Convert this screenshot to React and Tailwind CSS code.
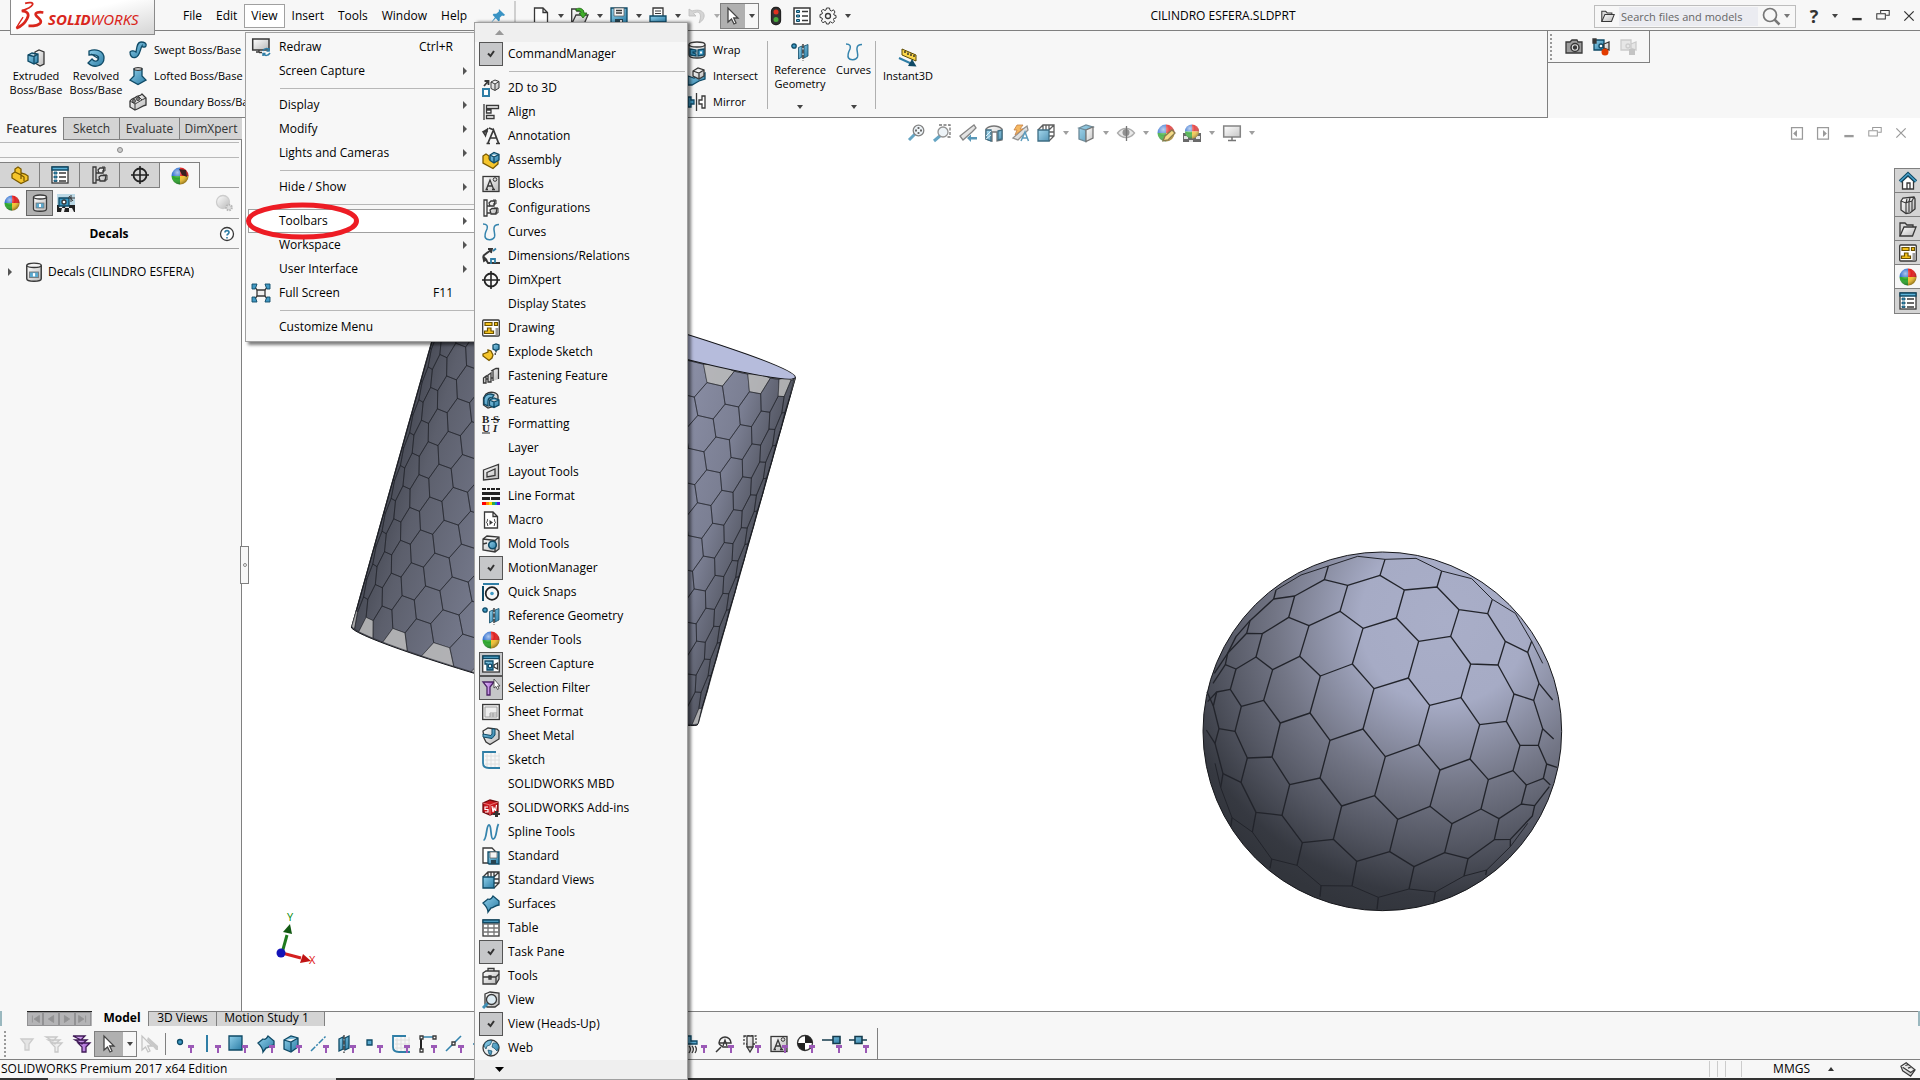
import clsx from "clsx";

const INK = "#383838";
const NAVY = "#0f4a66";
const BLUE = "url(#blue)";
const GRAY = "url(#gray)";

// shared paint servers for every icon and for the two models
function Paints() {
  return (
    <svg className="absolute size-0" aria-hidden="true">
      <defs>
        <linearGradient id="blue" x1="0" y1="0" x2="1" y2="1">
          <stop offset="0" stopColor="#8fcfea" />
          <stop offset="1" stopColor="#2c7da6" />
        </linearGradient>
        <linearGradient id="gray" x1="0" y1="0" x2="1" y2="1">
          <stop offset="0" stopColor="#ffffff" />
          <stop offset="1" stopColor="#b9b9b9" />
        </linearGradient>
        <linearGradient id="purple" x1="0" y1="0" x2="1" y2="0">
          <stop offset="0" stopColor="#e9c8ff" />
          <stop offset="1" stopColor="#a35fd0" />
        </linearGradient>
        <radialGradient id="shine" cx="0.35" cy="0.3" r="0.7">
          <stop offset="0" stopColor="#fff" stopOpacity="0.6" />
          <stop offset="0.5" stopColor="#fff" stopOpacity="0" />
          <stop offset="1" stopColor="#000" stopOpacity="0.35" />
        </radialGradient>
        <radialGradient id="sphere" gradientUnits="userSpaceOnUse" cx="790" cy="270" r="900">
          <stop offset="0" stopColor="#a9aec8" />
          <stop offset="0.28" stopColor="#a6abc5" />
          <stop offset="0.42" stopColor="#8c90a5" />
          <stop offset="0.56" stopColor="#737686" />
          <stop offset="0.75" stopColor="#545763" />
          <stop offset="0.92" stopColor="#363941" />
          <stop offset="1" stopColor="#32353c" />
        </radialGradient>
        <linearGradient id="cylinder" gradientUnits="userSpaceOnUse" x1="155" y1="460" x2="1194" y2="751">
          <stop offset="0" stopColor="#4a4d58" />
          <stop offset="0.08" stopColor="#5c5f6c" />
          <stop offset="0.3" stopColor="#737789" />
          <stop offset="0.7" stopColor="#8b8fa6" />
          <stop offset="0.88" stopColor="#7b7f93" />
          <stop offset="1" stopColor="#545763" />
        </linearGradient>
      </defs>
    </svg>
  );
}

const ball = (
  <g stroke="none">
    <path d="M9 9V0.500A8.500 8.500 0 0 0 0.500 9Z" fill="#2f6fd0" />
    <path d="M9 9V0.500A8.500 8.500 0 0 1 17.500 9Z" fill="#e02020" />
    <path d="M9 9H0.500A8.500 8.500 0 0 0 9 17.500Z" fill="#2ba52b" />
    <path d="M9 9H17.500A8.500 8.500 0 0 1 9 17.500Z" fill="#f4c22e" />
    <circle cx="9" cy="9" r="8.600" fill="url(#shine)" />
  </g>
);

const refGeometry = (
  <>
    <circle cx="3" cy="3" r="2.2" fill="#3f9ac4" stroke={NAVY} />
    <path d="M7.5 4.5 11 3V14L7.5 16ZM13 3 17 1.5V13L13 15Z" fill={BLUE} stroke={NAVY} strokeWidth="0.8" />
    <path d="M12 1V18" stroke="#222" strokeDasharray="4 1.5" />
  </>
);

const curves = (
  <path d="M1 1C5 1 6 3 5 6C3.500 9 2 12 3.500 15C5 17.500 11 17.500 12.500 14C13.500 11 11.500 8 12 5C12.300 2.500 14 1.500 17 1.500" stroke="#3584ad" strokeWidth="1.5" />
);

const cubeView = (
  <>
    <path d="M1 6 6 1H17V12L12 17M6 1V6M17 1 12 6M12 1V6M9 1V6M12 8H17M12 12H17" />
    <path d="M1 6H12V17H1Z" fill={BLUE} stroke={NAVY} />
  </>
);

const filter = <path d="M1 3H12L8 8V16H5V8Z" fill="url(#purple)" stroke="#4b2266" />;
const arrowPath = "M4 1V15L7.500 12 10 17 12 16 9.700 11H14Z";

const floppy = (
  <>
    <path d="M1 1H17V17H3L1 15Z" fill={BLUE} stroke={NAVY} />
    <path d="M4 1H14V9H4Z" fill="#f5f5f5" stroke="#666" strokeWidth="0.8" />
    <path d="M6 3.500H12M6 6H12" />
    <path d="M5 12H13V17H5Z" fill="#274350" stroke="none" />
    <path d="M10 13H12V16H10Z" fill="#ddd" stroke="none" />
  </>
);

const camcorder = (
  <>
    <path d="M2 2H12V12H2Z" fill={BLUE} stroke={NAVY} />
    <path d="M1 1H4V5H1Z" fill={INK} />
    <circle cx="9" cy="8" r="2" fill="#fff" stroke={NAVY} />
    <path d="M12 6 17 4V12L12 10Z" fill={GRAY} />
  </>
);

const drawing = (
  <>
    <rect x="0.700" y="1" width="16.600" height="16" rx="1" fill="#fff" />
    <path d="M3 3.500H10V6.500H3ZM12.500 3.500H15.500V6.500H12.500ZM2.500 14.500V12H5.500V9H9V12H11.500V14.500Z" fill="#f3c11b" stroke="#6b5200" strokeWidth="1.200" />
    <path d="M13.500 9H16.500V16.500H13.500Z" fill="#9a9a9a" stroke="none" />
  </>
);

const listPane = (
  <>
    <rect x="1" y="1" width="16" height="16" fill="#fff" />
    <path d="M1 1H17V4H1Z" fill="#5db2d8" stroke={NAVY} />
    <path d="M3 6H6V8H3ZM3 10H6V12H3ZM3 14H6V15.500H3Z" fill="#3f9ac4" stroke={NAVY} strokeWidth="0.8" />
    <path d="M8 7H15M8 11H15M8 15H15" />
  </>
);

const config = (
  <>
    <path d="M2 17V1H5V17ZM5 7H8M5 14H8" />
    <path d="M7 4 9 2H13L12 7H8ZM8 11 10 9.500H15L14 15H9Z" fill={GRAY} />
    <path d="M11 1H14V5H11M12 9H16V14H13" strokeWidth="1" />
  </>
);

const crosshair = (
  <>
    <circle cx="9" cy="9" r="6.500" stroke="#222" strokeWidth="1.800" />
    <path d="M9 0V18M0 9H18" stroke="#222" strokeWidth="1.600" />
  </>
);

const assemblyPart = "M1 5 4 3 7 5V8L12 11 16 9V13L11 17.500 1 12Z";

const cylinderDecal = (
  <>
    <path d="M2.500 3V15C2.500 18 15.500 18 15.500 15V3" fill={GRAY} />
    <ellipse cx="9" cy="3" rx="6.500" ry="2" fill="#f4f4f4" />
    <rect x="5" y="9" width="8" height="5" fill="#5aa9cf" stroke="#777" strokeWidth="0.8" />
    <path d="M8 10H10V13H8Z" fill="#fff" stroke="none" />
  </>
);

const magnifier = (
  <>
    <path d="M8 10 2 16" stroke="#3f8fb5" strokeWidth="3" />
    <circle cx="11.500" cy="6.500" r="5.300" fill="#e9f1f6" stroke="#666" />
  </>
);

const openFolder = (
  <>
    <path d="M1 16V3H6L8 5H14V8" fill="#d9d9d9" />
    <path d="M1 16 5 7H17L13.500 16Z" fill={GRAY} />
  </>
);

const icons = {
  twoToThree: (
    <>
      <path d="M1 10H7V17H1Z" fill="#fff" stroke="#2f7ea6" strokeWidth="2" />
      <path d="M2 7 5.500 3M2.500 2H6.500V6" strokeWidth="1.800" />
      <path d="M9 3 13 1 17 2.500V9L13 11.500 9 9.500ZM9 3 13 5 17 2.500M13 5V11" fill={GRAY} strokeWidth="1" />
    </>
  ),
  align: <path d="M2 1V17M4.500 2.500H16.500V5.500H4.500ZM4.500 7H9V10H4.500ZM4.500 12.500H12V15.500H4.500Z" fill="#fff" />,
  annotation: (
    <>
      <path d="M6 16 11.500 3 16.500 16M8 11H14.500M4.500 16.500H8M14 16.500H18M7 1 12 3" strokeWidth="1.700" />
      <path d="M1 4 3.500 9 6 1M1 5H5L3 8Z" fill={INK} />
    </>
  ),
  assembly: (
    <>
      <path d={assemblyPart} fill="#f5c52c" stroke="#7a5a00" />
      <path d="M8 4 12 1.500 17 3.500V9L12 12 8 9.500ZM8 4 12 6 17 3.500M12 6V12" fill={BLUE} stroke={NAVY} />
    </>
  ),
  blocks: (
    <>
      <rect x="1" y="1.500" width="16" height="15" fill={GRAY} />
      <path d="M4.500 14 8 5 11.500 14M6 11H10M3.500 14.500H6M10 14.500H13" />
      <circle cx="13" cy="4.500" r="1.800" strokeWidth="1" />
    </>
  ),
  config,
  curves,
  dimensions: (
    <>
      <path d="M1 9 9 3M1 9 6 5M1 9 2 14 5 12M6 2 10 2 9 6M1 9C4 12 5 14 6 16H18" strokeWidth="1.800" />
      <path d="M11 4 14 1.500M9 11V17M9 12H13V16" stroke="#2f7ea6" strokeWidth="1.800" />
    </>
  ),
  crosshair,
  drawing,
  explode: (
    <>
      <path d="M1 11 6 9V7L9 8 11 12 10 15 7 17.500 1 13Z" fill="#f5c52c" stroke="#7a5a00" />
      <path d="M11 2 14 1 17 2V6L14 7.500 11 6Z" fill={BLUE} stroke={NAVY} />
      <path d="M14 8V11H11" strokeDasharray="1.500 1.500" stroke="#222" />
    </>
  ),
  fastening: <path d="M1.500 16V11L4 9V16ZM6 15V8L9 6V15ZM11 14V3L14 1.500H16.500V12M4 12H6M9 11H11M4 9H6M9 4 11 3" fill={GRAY} />,
  features: (
    <>
      <path d="M4 3C8 0 15 1 16 5L16 14 6 17 1.500 14V7Z" fill={GRAY} />
      <path d="M2 8C3 3 8 2 12 4L10 7C7 6 6 8 6 11L6 15 2 13Z" fill={BLUE} stroke={NAVY} />
      <path d="M7.500 9 12 7 17 9V14L12 16.500 7.500 14.500ZM7.500 9 12 11 17 9M12 11V16" fill={BLUE} stroke={NAVY} />
    </>
  ),
  formatting: (
    <g fontFamily="Liberation Serif, serif" fontSize="11" fontWeight="bold" stroke="none" fill="#222">
      <text x="0" y="8">B</text>
      <text x="11" y="8">S</text>
      <text x="0" y="17">U</text>
      <text x="11" y="17" fontStyle="italic">I</text>
      <path d="M9 4H18V5H9ZM0 17.500H8V18.500H0Z" />
    </g>
  ),
  layout: <path d="M1.500 7 16.500 1.500V15.500L1.500 17ZM5 9.500 13 6V12.500L5 14Z" fill={GRAY} />,
  lineFormat: (
    <g stroke="none">
      <path d="M0 1H4V3H0ZM5 1H8V3H5ZM9 1H13V3H9ZM14 1H18V3H14ZM0 5H18V8H0ZM0 10H8V13H0ZM9 10H18V13H9Z" fill="#222" />
      <path d="M0 15H4V18H0Z" fill="#f00" />
      <path d="M4 15H7V18H4Z" fill="#f80" />
      <path d="M7 15H10V18H7Z" fill="#fd0" />
      <path d="M10 15H13V18H10Z" fill="#3a4" />
      <path d="M13 15H15V18H13Z" fill="#08c" />
      <path d="M15 15H18V18H15Z" fill="#51d" />
    </g>
  ),
  macro: (
    <>
      <path d="M2.500 1H11L15.500 5.500V17H2.500ZM11 1V5.500H15" fill="#fff" />
      <path d="M6 8C5 8 6 10 4.500 11.500C6 12 5 14 6 15M12 8C13 8 12 10 13.500 11.500C12 12 13 14 12 15" strokeWidth="1" />
      <path d="M7.500 9V14L11 11.500Z" fill={INK} stroke="none" />
    </>
  ),
  mold: (
    <>
      <path d="M1 4 5 1 17 2V14L13 17 1 15ZM1 4 13 5.500 17 2M13 5.500V17M1 9 5 8" fill={GRAY} />
      <circle cx="10.500" cy="10" r="3.800" fill={BLUE} stroke={NAVY} strokeWidth="1.600" />
    </>
  ),
  snaps: (
    <>
      <path d="M1 1H17" stroke="#2f7ea6" strokeWidth="2" />
      <path d="M1 3V18" stroke={NAVY} strokeWidth="2" />
      <circle cx="10" cy="10.500" r="6.300" stroke="#222" strokeWidth="1.700" />
      <circle cx="10" cy="10.500" r="1.800" fill="#3f9ac4" stroke="none" />
    </>
  ),
  refGeometry,
  ball,
  screenCapture: (
    <>
      <rect x="0.700" y="1" width="16.600" height="16" fill="#fff" />
      <path d="M1 1H17V3.500H1Z" fill="#5db2d8" stroke={NAVY} />
      <path d="M3 6H11V15H5V9H3Z" fill={BLUE} stroke={NAVY} />
      <circle cx="8" cy="11" r="1.800" fill="#fff" stroke={NAVY} />
      <path d="M12 10 15.500 8V14L12 12Z" fill="#fff" />
    </>
  ),
  selectionFilter: (
    <>
      {filter}
      <path d="M12 0V9L14 7.500 15.500 10.500 17 9.500 15.500 7H18Z" fill="#fff" strokeWidth="0.8" />
    </>
  ),
  sheetFormat: (
    <>
      <rect x="0.700" y="1.500" width="16.600" height="15" fill="#eee" />
      <path d="M3 4H15V14H3ZM8 14V10H15M8 12H15M11 10V14" stroke="#999" strokeWidth="0.900" />
    </>
  ),
  sheetMetal: (
    <>
      <path d="M1 4 6 1 15 2 17 4V12L8 17.500 4 15 2 11Z" fill={GRAY} />
      <path d="M1 7V10L10 11.500 13 8V2H10V7L9 8.500Z" fill={BLUE} stroke={NAVY} strokeWidth="1" />
    </>
  ),
  sketch: (
    <>
      <path d="M5 3V18M9 0V18M13 0V18M17 2V18M3 5H18M3 9H18M3 13H18" stroke="#dedede" strokeWidth="1" />
      <path d="M14 1H1V12C1 16 3 17 7 17H18" stroke="#2f7ea6" strokeWidth="1.800" />
    </>
  ),
  addins: (
    <>
      <path d="M1 4 8 1 16 3V13L8 16 1 13Z" fill="#c8171e" stroke="#6d0a0e" />
      <path d="M1 4 8 6 16 3M8 6V16" stroke="#f28b8b" strokeWidth="0.8" />
      <path d="M6 8H3V10.500H6V13H3M10 7 11 13 12 9 13.500 12 14.500 6" stroke="#fff" strokeWidth="1.200" />
      <path d="M13 12H16V14H18V16H16V18H13V16H11V14H13Z" fill="#333" stroke="none" />
    </>
  ),
  spline: <path d="M1.500 17C5 17 4 2 7 2C10 2 8 16 11 16C15 16 14 5 16.500 1" stroke="#3584ad" strokeWidth="1.800" />,
  standard: (
    <>
      <path d="M1 1H10L13 4V16H1Z" fill="#fff" />
      <path d="M6 5H17V17H7L6 16Z" fill={BLUE} stroke={NAVY} />
      <path d="M8 5H15V11H8Z" fill="#f5f5f5" stroke="#666" strokeWidth="0.8" />
      <path d="M9 13H14V17H9Z" fill="#274350" stroke="none" />
    </>
  ),
  cubeView,
  surfaces: <path d="M1 8 6 4C8 5 10 3 11 1L17 6V10C13 10 12 13 9 13L6 17C6 13 4 11 1 8Z" fill={BLUE} stroke={NAVY} />,
  table: (
    <>
      <rect x="1" y="1" width="16" height="16" fill="#fff" />
      <path d="M1 5H17V4H1ZM1 9H17M1 13H17M6 4V17M12 4V17" stroke="#777" />
      <path d="M1 1H17V3.500H1Z" fill="#5db2d8" stroke={NAVY} />
    </>
  ),
  toolbox: (
    <>
      <path d="M1 6 4 4H17V12L14 17H1Z" fill={GRAY} />
      <path d="M6 4V1.500H12V4M1 10H14L17 7M14 10V16M7 9V12H9V9Z" />
    </>
  ),
  viewTool: (
    <>
      <path d="M3 3 8 1 17 2V13L13 16H5L3 13Z" fill={GRAY} />
      <path d="M6 12 1 17" stroke="#3f8fb5" strokeWidth="3" />
      <circle cx="9.500" cy="8.500" r="5" fill="#dcebf3" />
    </>
  ),
  web: (
    <>
      <circle cx="9" cy="9" r="8" fill="#e9eef1" />
      <path d="M3 4C6 1 9 1 10 2L8 6 5 7 4 10 2 7ZM11 4 15 4 17 8 15 12 12 9 10 8ZM6 11 10 12 9 16 7 15Z" fill={BLUE} stroke={NAVY} strokeWidth="0.700" />
    </>
  ),
  redraw: (
    <>
      <path d="M0.700 1H17V12H0.700Z" fill={GRAY} strokeWidth="1.500" />
      <path d="M7 12V14H4M7 14.500H10" />
      <path d="M11 13C12 10 16 10 17 12M17 10V13H14.500M18 15C16 18 13 18 11.500 16M11 18V15.500H13.500" stroke="#2f7ea6" strokeWidth="1.500" />
    </>
  ),
  fullScreen: (
    <>
      <path d="M5 6H13V12H5Z" fill="#eee" />
      <path d="M5 6 2 2M13 6 16 2M5 12 2 16M13 12 16 16" />
      <path d="M0 0H5L4 3 3 5H0ZM18 0H13L14 3 15 5H18ZM0 18H5L4 15 3 13H0ZM18 18H13L14 15 15 13H18Z" fill="#4399c3" stroke={NAVY} strokeWidth="0.900" />
    </>
  ),
  extruded: (
    <>
      <path d="M8 3 12 1 17 3V15L13 17 8 14Z" fill={GRAY} />
      <path d="M1 6 5 4 11 5V13L7 15 1 12ZM1 6 7 7.500 11 5M7 7.500V15" fill={BLUE} stroke={NAVY} />
    </>
  ),
  revolved: (
    <path d="M2 2C9-1 17 2 17 9C17 17 7 20 1 14L5 10C8 14 12 12 11.500 8C10 6 7 5 2 6ZM4 5 12 10" fill={BLUE} stroke={NAVY} />
  ),
  swept: <path d="M1 11C2 9 6 10 7 11C8 6 8 1 12 1C15 1 18 2 17 5C16 7 13 6 13 5C11 8 11 16 6 16.500C3 17 1 15 1 11Z" fill={BLUE} stroke={NAVY} />,
  lofted: (
    <>
      <path d="M5 2 13 2 13 9 17 13 9 17.500 1 13 5 9Z" fill={BLUE} stroke={NAVY} />
      <ellipse cx="9" cy="2" rx="4" ry="1.300" fill="#eee" />
    </>
  ),
  boundary: (
    <>
      <path d="M1 8C3 5 5 6 7 4C9 2 11 4 13 1L17 5V12C13 13 11 15 6 17L1 14Z" fill={GRAY} />
      <path d="M1 8 6 11V17M6 11C10 9 12 7 17 5M9 3 13 7" strokeWidth="1" />
      <circle cx="9" cy="6" r="1.300" />
      <circle cx="5" cy="8" r="1.300" />
    </>
  ),
  wrap: (
    <>
      <path d="M1 3.500V14C1 18 17 18 17 14V3.500" fill={GRAY} />
      <ellipse cx="9" cy="3.500" rx="8" ry="2.500" fill="#f4f4f4" />
      <path d="M2 8 8 9V11H5V12L8 13V15L2 14ZM10 9 16 8V14L10 15Z" fill="#3f9ac4" stroke={NAVY} />
      <path d="M12 10.500H14V12.500H12Z" fill="#fff" stroke="none" />
    </>
  ),
  intersect: (
    <>
      <path d="M0 9 6 11 17 6V12L11 14 4 18H0Z" fill={BLUE} stroke={NAVY} />
      <path d="M5 4 10 1 16 3V9L11 12 5 9ZM5 4 11 6 16 3M11 6V11" fill={GRAY} />
    </>
  ),
  mirror: (
    <>
      <path d="M0 4H3V7H6V11H3V14H0Z" fill="#3f9ac4" stroke={NAVY} />
      <path d="M8.500 0V18" />
      <path d="M17 3V15H14V11H11V7H14V3Z" fill="#fff" />
    </>
  ),
  instant3d: (
    <>
      <path d="M3 0 17 6V12L3 6Z" fill="#fbd64a" stroke="#5c4a00" strokeWidth="1" />
      <path d="M6 2V4M9 3.500V6M12 4.500V7M15 6V8" stroke="#222" />
      <path d="M0 9 12 14.500" stroke="#2f7ea6" strokeWidth="2" />
      <path d="M13 10 17.500 17.500 9 17Z" fill={NAVY} stroke="none" />
    </>
  ),
  newDoc: <path d="M2.500 1H11L15.500 5.500V17H2.500ZM11 1V5.500H15" fill="#fff" />,
  openDoc: (
    <>
      <path d="M0.700 17V2H5L6 4H12V7M0.700 17 5 8H17L13 17Z" fill={GRAY} />
      <path d="M5 2C9 0 13 2 13 6H16L12 11 8 6H10C10 4 8 3 5 4Z" fill="#3fae2a" stroke="#1c6310" strokeWidth="0.8" />
    </>
  ),
  floppy,
  printer: (
    <>
      <path d="M4 9V1H14V9" fill="#fff" />
      <path d="M1 9H17V15H1Z" fill={BLUE} stroke={NAVY} />
      <path d="M6 4H12M6 6.500H12" strokeWidth="1" />
    </>
  ),
  undo: <path d="M1 2V9H8L5.500 6.500C10 3 15 6 11 16C20 11 17 0 4 4Z" fill="#d5d5d5" stroke="#bbb" strokeWidth="0.8" />,
  arrow: <path d={arrowPath} fill="#fff" stroke="#444" />,
  traffic: (
    <>
      <rect x="4.500" y="0.500" width="9" height="17" rx="4" fill="#333" stroke="#222" />
      <circle cx="9" cy="5" r="2.500" fill="#e0301e" stroke="none" />
      <circle cx="9" cy="12.500" r="2.500" fill="#46a83a" stroke="none" />
    </>
  ),
  options: (
    <>
      <rect x="1" y="1" width="16" height="16" fill="#fff" strokeWidth="1.500" />
      <path d="M3.500 3.500H6.500V5.500H3.500ZM3.500 8H6.500V10H3.500ZM3.500 12.500H6.500V14.500H3.500Z" fill="#5db2d8" stroke={NAVY} strokeWidth="1" />
      <path d="M9 4.500H15M9 9H15M9 13.500H15" />
    </>
  ),
  gear: (
    <>
      <circle cx="9" cy="9" r="2.500" />
      <path d="M7.500 1H10.500L11 3.300 12.500 4 14.500 2.800 16 5 14.700 7 15 8 17 8.500V11L14.800 11.500 14.500 12.500 15.500 14.500 13.500 16 11.500 14.800 10.500 15 10 17H7.500L7 15 6 14.500 4 15.700 2.300 14 3.500 12 3 11 1 10.500V7.500L3 7 3.500 6 2.300 4 4 2.300 6 3.500 7 3Z" strokeWidth="1" />
    </>
  ),
  pin: <path d="M10 1 17 8 15 9 13.500 8.500 11 11 11 14 9.500 15 6.500 11.500 1 17 5.500 10.500 3 8 4 6.500 7 6.500 10 4Z" fill="#3a93c4" stroke="none" />,
  part: <path d="M1 8 4 6V3L7 1 10 3V7L14 8 17 10V14L10 17.500 1 12ZM4 6 10 9V13M10 7 10 9 13 11V15" fill="#f5c52c" stroke="#7a5a00" />,
  listPane,
  ballDark: (
    <>
      {ball}
      <path d="M8 2 15 3 16 10 11 8Z" fill="#3a2020" stroke="none" />
    </>
  ),
  cylinderDecal,
  scene: (
    <>
      <path d="M0 0H18V11H0Z" fill="#bcd9e6" stroke="none" />
      <path d="M0 11H18V18H0Z" fill="#222" stroke="none" />
      <path d="M3 11H6L5 14H2ZM9 11H12V14H8ZM5 14H8L7 18H4ZM12 14H15L17 18H12Z" fill="#eee" stroke="none" />
      <path d="M2 4H12V12H2Z" fill="#3f9ac4" stroke={NAVY} />
      <circle cx="7" cy="8" r="2" fill="#fff" />
      <path d="M14 1V8M11 4H18M12 2 16 7" strokeWidth="1" />
    </>
  ),
  ballGray: (
    <>
      <circle cx="8" cy="8" r="6.500" fill={GRAY} stroke="#ccc" />
      <circle cx="14" cy="13.500" r="2.800" fill="#ddd" stroke="#b5b5b5" strokeWidth="2" strokeDasharray="1.500 1" />
    </>
  ),
  zoomFit: (
    <>
      {magnifier}
      <path d="M11.500 3V10M8 6.500H15" stroke="#444" strokeDasharray="2 3" strokeWidth="1.800" />
    </>
  ),
  zoomArea: (
    <>
      <path d="M6 1H17V13H14" strokeDasharray="3 1.500" stroke="#555" />
      <path d="M8 11 1 17" stroke="#3f8fb5" strokeWidth="3" />
      <circle cx="10" cy="8" r="5" fill="#e9f1f6" stroke="#777" />
    </>
  ),
  previousView: (
    <>
      <path d="M1 12 11 4 15 1 17 4 13 8 4 16Z" fill={GRAY} stroke="#666" />
      <path d="M8 14 12 10.500V13H18V15.500H12V18Z" fill="#2f7ea6" stroke="none" />
    </>
  ),
  section: (
    <>
      <path d="M1 5C5 1 13 1 17 5V16L12 17V8H7V17L1 15Z" fill={GRAY} stroke="#555" />
      <path d="M1 6H6V17L1 15ZM13 7 17 6V15L13 16Z" fill={BLUE} stroke={NAVY} />
      <path d="M1 12 6 7M1 15 6 11" stroke="#fff" strokeWidth="0.8" />
    </>
  ),
  dynamicAnno: (
    <>
      <path d="M2 14 12 5 16 2 17 6 7 16Z" fill={GRAY} stroke="#777" />
      <path d="M6 1H12L9 5H12L4 11 6 6H3Z" fill="#f3a73b" stroke="#b9631a" strokeWidth="0.8" />
      <path d="M10 17 14 8 17.500 17M11.500 14H16.500" stroke="#3584ad" strokeWidth="1.500" />
    </>
  ),
  displayStyle: (
    <>
      <path d="M2 4 9 6V17.500L2 15ZM2 4 9 1 16 3 9 6Z" fill={BLUE} stroke="#4b6f80" />
      <path d="M9 6 16 3V14L9 17.500Z" fill={GRAY} stroke="#555" />
    </>
  ),
  eye: (
    <>
      <path d="M0.500 9C5 3 13 3 17.500 9C13 15 5 15 0.500 9Z" fill="#e4e4e4" stroke="#999" />
      <circle cx="9" cy="8.500" r="3.500" fill="#777" stroke="none" />
      <path d="M9.500 2V17" stroke="#555" />
    </>
  ),
  editAppearance: (
    <>
      {ball}
      <path d="M6 17 8 12 15 6 18 9 11 16Z" fill="#f3d36b" stroke="#6b5a20" />
    </>
  ),
  applyScene: (
    <>
      <path d="M0 9H18V18H0Z" fill="#444" stroke="none" />
      <path d="M1 12H5V15H1ZM13 12H17V15H13ZM6 16H10V18H6Z" fill="#ddd" stroke="none" />
      <g transform="translate(1.500 0) scale(0.830)">{ball}</g>
    </>
  ),
  monitor: (
    <>
      <path d="M0.700 2H17.300V13H0.700Z" fill={GRAY} stroke="#666" strokeWidth="1.500" />
      <path d="M9 13V16M5 16.500H13" stroke="#555" strokeWidth="1.500" />
    </>
  ),
  camera: (
    <>
      <path d="M1 4H5L7 2H12L13 4H17V15H1Z" fill="#9c9c9c" />
      <circle cx="10" cy="9.500" r="4" fill="#ddd" strokeWidth="1.500" />
      <circle cx="10" cy="9.500" r="1.500" fill="#333" />
    </>
  ),
  record: (
    <>
      {camcorder}
      <circle cx="13" cy="14" r="3.500" fill="#e23b00" stroke="none" />
    </>
  ),
  recordStop: (
    <>
      <path d="M2 2H12V12H2ZM12 6 17 4V12L12 10Z" fill="#e6e6e6" stroke="#ccc" />
      <circle cx="9" cy="8" r="2" stroke="#ccc" />
      <path d="M10 11H16V17H10Z" fill="#c4c4c4" stroke="none" />
    </>
  ),
  home: (
    <>
      <path d="M3.500 9V17H14.500V9L9 4Z" fill="#fff" />
      <path d="M8 17V11H11V17" />
      <path d="M1 9.500 9 2 17 9.500" stroke={NAVY} strokeWidth="3.500" />
      <path d="M1 9.500 9 2 17 9.500" stroke="#4ca3cc" strokeWidth="1.300" />
    </>
  ),
  books: (
    <>
      <path d="M2 5 4 2 15 1 16 3V13L11 17 7 17.500 2 14Z" fill={GRAY} />
      <path d="M2 5 7 7V17M7 7 8 3M7 7 10 5.500V16M10 5.500 11 2M10 6 13 5V15M13 5 15 1" strokeWidth="1.100" />
    </>
  ),
  openFolder,
  funnelOff: <path d="M3 4H15L11 9V15H7V9Z" fill="#e4e4e4" stroke="#ccc" />,
  funnelsOff: <path d="M1 2H12L8 6ZM3 5H15L10 9ZM6 8H17L13 12V17H10V12Z" fill="#eee" stroke="#c8c8c8" />,
  funnels: <path d="M1 1H13L9 5ZM3 5H15L10 9ZM6 8H18L14 12V17H10V12Z" fill="url(#purple)" stroke="#3f1a57" />,
  arrowOff: (
    <>
      <path d={arrowPath} fill="#f5f5f5" stroke="#c4c4c4" transform="translate(-3 0)" />
      <path d="M7 2 17 11V15H15L6 5Z" fill="#c8c8c8" stroke="none" />
    </>
  ),
  help: (
    <>
      <circle cx="9" cy="9" r="6.500" fill="#fff" />
      <path d="M7 7.500C7 5 11 5 11 7.500C11 9 9 9 9 10.500M9 12V13.500" stroke="#2f7ea6" strokeWidth="1.600" />
    </>
  ),
  point: <circle cx="4" cy="7" r="2.500" fill="#3f9ac4" stroke={NAVY} />,
  edge: <path d="M4 0V17" stroke="#2f7ea6" strokeWidth="2" />,
  face: <path d="M-1 1H12V15H-1Z" fill={BLUE} stroke={NAVY} />,
  body: <path d="M0 5 7 1 14 3V12L7 17 0 14ZM0 5 7 7 14 3M7 7V16" fill={BLUE} stroke={NAVY} />,
  axis: <path d="M0 16 15 1" stroke="#3584ad" strokeWidth="1.500" strokeDasharray="6 1.500 2 1.500" />,
  plane: (
    <>
      <path d="M1 4 5 2V14L1 16ZM7 3 11 1V13L7 15Z" fill={BLUE} stroke={NAVY} />
      <path d="M6 0V18" strokeDasharray="4 1.500" />
    </>
  ),
  square: <path d="M2 5H7V10H2Z" fill="#5aa9cf" stroke={NAVY} />,
  segment: (
    <>
      <path d="M2 16V2H16" stroke="#3584ad" strokeWidth="1.600" />
      <path d="M2 16V4" stroke="#222" strokeWidth="2" />
      <path d="M1 1H4V4H1ZM14 1H17V4H14ZM1 14H4V17H1Z" fill="#fff" />
    </>
  ),
  midpoint: (
    <>
      <path d="M0 16 15 1" stroke="#3584ad" strokeWidth="1.600" />
      <path d="M6 7H9V10H6Z" fill="#fff" />
    </>
  ),
  center: <path d="M0 9H6M3 6V12" stroke="#2f7ea6" />,
  weld: (
    <>
      <path d="M-2 1H2V6H8V9H-2Z" fill="#5aa9cf" stroke={NAVY} />
      <path d="M-3 11C-1 13-1 15-3 18M0 11C2 13 2 15 0 18M3 11C5 13 5 15 3 18M6 11C8 13 8 15 6 18" />
    </>
  ),
  datum: (
    <>
      <path d="M3 8A6 6 0 0 1 15 8ZM3 9 7 12H15M5 12 0 17" strokeWidth="1.500" />
      <path d="M7 11 9 5 11 11" />
    </>
  ),
  tag: (
    <>
      <path d="M1 1H13V9H1Z" strokeDasharray="2 1.500" />
      <path d="M4 1H10V12H4ZM4 12H10L7 17Z" fill={GRAY} />
    </>
  ),
  mass: (
    <>
      <circle cx="8" cy="8" r="7.500" fill="#fff" />
      <path d="M8 8V0.500A7.500 7.500 0 0 1 15.500 8ZM8 8V15.500A7.500 7.500 0 0 1 0.500 8Z" fill="#222" stroke="none" />
    </>
  ),
  routeEnd: <path d="M-2 5H9M9 1.500H16V8.500H9Z" fill={BLUE} stroke="#163c4e" strokeWidth="1.600" />,
  routeMid: <path d="M-2 5H4M11 5H16M4 1.500H11V8.500H4Z" fill={BLUE} stroke="#163c4e" strokeWidth="1.600" />,
  restore: <path d="M6 5V2H17V8H13M1 6H12V13H1Z" stroke="currentColor" />,
  close: <path d="M3 3 15 15M15 3 3 15" stroke="currentColor" strokeWidth="1.600" />,
  minimize: <path d="M3 13H15" stroke="currentColor" strokeWidth="3" />,
  paneLeft: (
    <>
      <path d="M2 2H16V17H2Z" stroke="currentColor" strokeWidth="1.600" />
      <path d="M9 5 4 9.500 9 14Z" fill="currentColor" stroke="none" />
    </>
  ),
  paneRight: (
    <>
      <path d="M2 2H16V17H2Z" stroke="currentColor" strokeWidth="1.600" />
      <path d="M9 5 14 9.500 9 14Z" fill="currentColor" stroke="none" />
    </>
  ),
  search: (
    <>
      <circle cx="8" cy="8" r="6.500" stroke="#777" strokeWidth="1.700" />
      <path d="M12.500 12.500 17.500 17.500" stroke="#777" strokeWidth="2.500" />
    </>
  ),
  rebuild: <path d="M1 6 7 2 17 10 12 17 3 11ZM3 7 12 13 16 10M6 5 10 4M9 8 12 7" fill={GRAY} />,
};

function Icon({ name, className = "size-[18px]" }) {
  return (
    <svg
      viewBox="0 0 18 18"
      className={clsx("shrink-0 overflow-visible", className)}
      fill="none"
      stroke={INK}
      strokeWidth="1.300"
      aria-hidden="true"
    >
      {icons[name]}
    </svg>
  );
}

function Caret({ className = "text-[#444]" }) {
  return (
    <svg viewBox="0 0 6 4" className={clsx("h-1 w-1.5 shrink-0", className)} aria-hidden="true">
      <path d="M0 0H6L3 4Z" fill="currentColor" />
    </svg>
  );
}

function RightArrow() {
  return (
    <svg viewBox="0 0 4 8" className="h-2 w-1 shrink-0" aria-hidden="true">
      <path d="M0 0L4 4L0 8Z" fill="#555" />
    </svg>
  );
}

function Logo() {
  return (
    <div className="absolute top-0 left-[10px] z-10 flex h-[35px] w-[145px] items-center border border-t-0 border-[#8a8a8a] bg-linear-to-br from-white from-40% to-[#d6d6d6] pl-1 pb-1">
      <svg viewBox="22 0 86 86" className="size-[29px] shrink-0" fill="none" stroke="#d9261c" aria-hidden="true">
        <path d="M52 7 C64 3 78 4 74 11 C70 19 56 25 42 29" strokeWidth="5" />
        <path d="M42 29 C58 30 66 38 58 52 C52 64 38 76 26 81" strokeWidth="8" />
        <path d="M26 81 C30 72 38 60 46 48" strokeWidth="4" />
        <path d="M106 34 C92 32 80 34 84 42 C88 50 102 54 98 64 C94 73 80 74 62 74" strokeWidth="8" />
      </svg>
      <span className="pt-2 pl-1 font-['Noto_Sans',sans-serif] text-[15px] leading-5 text-[#d9261c] italic">
        <b>SOLID</b>WORKS
      </span>
    </div>
  );
}

const menus = ["File", "Edit", "View", "Insert", "Tools", "Window", "Help"];
const quickAccess = ["newDoc", "openDoc", "floppy", "printer", "undo"];

function TitleBar() {
  return (
    <header className="relative flex h-[31px] shrink-0 items-center border-b border-[#808080] bg-[#f7f7f7] pt-0.5 pl-[176px]">
      <Logo />
      <nav className="flex items-center">
        {menus.map((m) => (
          <button
            key={m}
            type="button"
            className={clsx("h-6 border px-1.5", m === "View" ? "border-[#a0a0a0] bg-white" : "border-transparent")}
          >
            {m}
          </button>
        ))}
      </nav>
      <div className="absolute left-[490px] flex h-full items-center">
        <button type="button" aria-label="Pin menu">
          <Icon name="pin" className="size-4" />
        </button>
        <span className="mr-4 ml-2 h-full w-0.5 bg-[#cfcfcf]" />
        {quickAccess.map((name) => (
          <button
            key={name}
            type="button"
            aria-label={name}
            className={clsx("flex items-center gap-2", name === "undo" ? "w-8" : "w-[39px]")}
          >
            <Icon name={name} />
            <Caret className={name === "undo" ? "text-[#aaa]" : "text-[#444]"} />
          </button>
        ))}
        <button type="button" aria-label="Select" className="mr-2 flex h-[26px] items-center border border-[#808080]">
          <span className="flex h-full w-6 items-center justify-center bg-[#b0b0b0]">
            <Icon name="arrow" />
          </span>
          <span className="flex w-[13px] justify-center">
            <Caret />
          </span>
        </button>
        <div className="flex items-center gap-2">
          <Icon name="traffic" />
          <Icon name="options" />
          <Icon name="gear" />
          <Caret />
        </div>
      </div>
      <h1 className="grow pl-[780px] text-center max-xl:hidden 2xl:pl-[378px]">CILINDRO ESFERA.SLDPRT</h1>
      <div className="flex items-center gap-3 pr-1">
        <label className="flex h-[23px] w-[202px] items-center gap-1 border border-[#bdbdbd] px-1.5">
          <Icon name="openFolder" className="size-3.5" />
          <input
            type="search"
            aria-label="Search"
            placeholder="Search files and models"
            className="h-[19px] w-[139px] bg-[#ebecf1] px-0.5 text-[11px] placeholder:text-[#666]"
          />
          <Icon name="search" />
          <Caret className="text-[#777]" />
        </label>
        <b className="w-3 text-center text-[18px] leading-5 text-[#333]">?</b>
        <Caret />
        <button type="button" aria-label="Minimize" className="text-[#333]">
          <Icon name="minimize" className="size-3.5" />
        </button>
        <button type="button" aria-label="Restore" className="text-[#333]">
          <Icon name="restore" className="size-3.5" />
        </button>
        <button type="button" aria-label="Close" className="text-[#333]">
          <Icon name="close" className="size-3.5" />
        </button>
      </div>
    </header>
  );
}

function BigTool({ icon, lines, caret, className }) {
  return (
    <button type="button" className={clsx("flex flex-col items-center", className)}>
      <Icon name={icon} className="mb-0.5 size-[18px]" />
      {lines.map((l) => (
        <span key={l} className="leading-[14px]">
          {l}
        </span>
      ))}
      {caret && <Caret className="mt-auto text-[#444]" />}
    </button>
  );
}

function SmallTools({ items }) {
  return (
    <div className="flex flex-col gap-2">
      {items.map(([icon, label]) => (
        <button key={label} type="button" className="flex h-[18px] items-center gap-[7px] whitespace-nowrap">
          <Icon name={icon} />
          {label}
        </button>
      ))}
    </div>
  );
}

function Ribbon() {
  return (
    <div className="flex h-[87px] shrink-0 bg-[#f7f7f7] text-[11px]">
      <div className="flex grow items-stretch border-r border-b border-[#808080] pt-2.5 pb-2">
        <BigTool icon="extruded" lines={["Extruded", "Boss/Base"]} className="ml-1.5 w-[60px] pt-2" />
        <BigTool icon="revolved" lines={["Revolved", "Boss/Base"]} className="w-[60px] pt-2" />
        <div className="ml-[3px] w-[559px]">
          <SmallTools
            items={[
              ["swept", "Swept Boss/Base"],
              ["lofted", "Lofted Boss/Base"],
              ["boundary", "Boundary Boss/Base"],
            ]}
          />
        </div>
        <div className="w-[79px]">
          <SmallTools
            items={[
              ["wrap", "Wrap"],
              ["intersect", "Intersect"],
              ["mirror", "Mirror"],
            ]}
          />
        </div>
        <div className="flex border-x border-[#b0b0b0] pt-0.5">
          <BigTool icon="refGeometry" lines={["Reference", "Geometry"]} caret className="w-16" />
          <BigTool icon="curves" lines={["Curves"]} caret className="w-[43px]" />
        </div>
        <BigTool icon="instant3d" lines={["Instant3D"]} className="w-16 pt-2" />
      </div>
      <div className="w-[372px] shrink-0">
        <div className="flex h-8 w-[102px] items-center gap-[9px] border-r border-b border-[#808080] pl-0.5">
          <span className="mr-1 h-[26px] border-l-2 border-dotted border-[#999]" />
          <Icon name="camera" />
          <Icon name="record" />
          <Icon name="recordStop" />
        </div>
      </div>
    </div>
  );
}

const managerTabs = ["part", "listPane", "config", "crosshair", "ballDark"];
const commandTabs = ["Features", "Sketch", "Evaluate", "DimXpert"];

function SidePanel() {
  return (
    <aside className="flex w-[242px] shrink-0 flex-col bg-[#f7f7f7]">
      <div className="-mt-px flex h-[23px] overflow-hidden">
        {commandTabs.map((t) => (
          <button
            key={t}
            type="button"
            className={clsx(
              "shrink-0 text-[#333]",
              t === "Features" && "w-[63px] bg-[#f7f7f7] font-semibold",
              t === "Sketch" && "w-14 border-y border-l border-[#808080] bg-[#d4d4d4]",
              t === "Evaluate" && "w-[60px] border-y border-l border-[#808080] bg-[#d4d4d4]",
              t === "DimXpert" && "w-[63px] border-y border-l border-[#808080] bg-[#d4d4d4]",
            )}
          >
            {t}
          </button>
        ))}
      </div>
      <div className="relative flex grow flex-col border-r border-[#808080] pt-0.5">
        <div className="mr-0.5 flex h-4 items-center justify-center border-y border-[#b8b8b8]">
          <span className="size-1.5 rounded-full border border-[#888] bg-[#ccc]" />
        </div>
        <div className="mt-1 mr-0.5 flex h-[26px]">
          {managerTabs.map((icon) => (
            <button
              key={icon}
              type="button"
              aria-label={icon}
              className={clsx(
                "flex w-10 items-center justify-center border-t border-r border-[#808080]",
                icon !== "ballDark" && "border-b bg-[#d4d4d4]",
              )}
            >
              <Icon name={icon} />
            </button>
          ))}
          <span className="grow border-b border-[#a0a0a0]" />
        </div>
        <div className="mr-0.5 flex h-[31px] items-center gap-1 border-b border-[#a0a0a0] pr-1.5 pl-1">
          <Icon name="ball" className="size-4" />
          <button type="button" aria-label="Decals" className="ml-0.5 flex h-[26px] w-[27px] items-center justify-center border border-[#666] bg-[#b0b0b0]">
            <Icon name="cylinderDecal" />
          </button>
          <Icon name="scene" />
          <span className="grow" />
          <Icon name="ballGray" />
        </div>
        <div className="mr-0.5 flex h-[30px] items-center border-b border-[#a0a0a0] pr-[3px]">
          <h2 className="grow text-center font-bold">Decals</h2>
          <Icon name="help" />
        </div>
        <div className="flex h-[46px] items-center gap-1 pl-2">
          <RightArrow />
          <span className="w-1" />
          <Icon name="cylinderDecal" className="size-5" />
          Decals (CILINDRO ESFERA)
        </div>
        <span className="absolute top-[406px] left-[240px] z-10 flex h-[38px] w-[9px] items-center justify-center border border-[#808080] bg-[#f7f7f7]">
          <span className="size-1 rounded-full border border-[#888]" />
        </span>
      </div>
    </aside>
  );
}

const headsUp = [
  ["zoomFit"],
  ["zoomArea"],
  ["previousView"],
  ["section"],
  ["dynamicAnno"],
  ["cubeView", true],
  ["displayStyle", true],
  ["eye", true],
  ["editAppearance"],
  ["applyScene", true],
  ["monitor", true],
];

// The surface of the tube is unrolled to a flat honeycomb: u runs round it, v along it.
const R = 540;
const COL = 87.25;
const ROW = 102.4;
const SIDE = 58.2;

function onTube(u, v) {
  const a = Math.max(-Math.PI / 2, Math.min(Math.PI / 2, u / R));
  const s = R * Math.sin(a) + 814;
  const t = Math.max(-233, Math.min(845, v)) + 37 * Math.cos(a);
  return `${(0.9628 * s - 0.2701 * t).toFixed(1)},${(0.2701 * s + 0.9628 * t).toFixed(1)}`;
}

const tubeCells = [];
for (let c = -15; c <= 5; c++) {
  for (let r = -3; r <= 8; r++) {
    const odd = Math.abs(c % 2) === 1;
    const u = 421 + c * COL;
    const v = 28 + r * ROW + (odd ? ROW / 2 : 0);
    if (v - ROW / 2 > 844 || v + ROW / 2 < -232) continue;
    const points = [
      onTube(u - SIDE / 2, v - ROW / 2),
      onTube(u + SIDE / 2, v - ROW / 2),
      onTube(u + SIDE, v),
      onTube(u + SIDE / 2, v + ROW / 2),
      onTube(u - SIDE / 2, v + ROW / 2),
      onTube(u - SIDE, v),
    ].join(" ");
    tubeCells.push({ points, cut: v > 800 || v < -200 });
  }
}

function Tube() {
  return (
    <svg viewBox="0 0 1440 1230" className="absolute top-[212px] left-[98px] h-[410px] w-[480px] overflow-visible" aria-label="Cylinder">
      <path d="M327 -147 A540 40 15.700 0 1 1366 145 L1072 1185 A540 36 15.700 0 1 36 888 Z" fill="url(#cylinder)" stroke="#15161a" strokeWidth="3" />
      <g stroke="#1d1e24" strokeWidth="1.500" strokeLinejoin="round">
        {tubeCells.map((cell) => (
          <polygon key={cell.points} points={cell.points} fill={cell.cut ? "#bcbcbc" : "none"} fillOpacity="0.850" />
        ))}
      </g>
      <ellipse cx="846" cy="-4" rx="540" ry="39" transform="rotate(15.700 846 -4)" fill="#b6bcdc" stroke="#15161a" strokeWidth="3" />
    </svg>
  );
}

const sphereRows = [
  "285,180 360,135 442,108 530,79 612,88 705,85 782,123 872,146 934,208 1003,250 1052,334 1085,400",
  "140,370 165,320 207,272 278,207 341,198 430,149 500,166 597,136 670,180 768,171 834,239 920,251 973,334 1040,367 1074,460 1115,510",
  "100,430 140,370 197,310 244,311 323,262 384,287 477,244 546,295 646,264 713,334 809,319 869,402 951,405 999,492 1058,511 1085,596 1118,627",
  "96,460 133,404 165,417 225,381 275,419 356,379 418,438 514,402 579,476 682,444 746,526 840,503 896,584 976,574 1017,646 1072,646 1097,702 1128,712",
  "80,515 107,486 148,478 181,529 248,511 298,579 387,549 447,631 546,597 613,680 713,644 777,720 867,687 922,749 996,722 1036,765 1087,745 1108,765",
  "78,485 97,528 114,596 162,604 199,684 273,681 326,764 417,744 482,828 581,797 650,868 747,829 813,881 900,837 954,866 1021,822 1061,827 1105,770",
  "76,600 102,640 126,731 180,757 225,847 303,856 364,938 457,928 527,994 626,965 699,1010 791,968 861,986 940,929 988,928 1054,858 1061,827",
  "102,700 119,772 153,863 214,906 272,987 348,1006 420,1067 513,1068 592,1102 684,1077 763,1086 849,1038 917,1020 988,950 1040,880",
];

const sphereSpokes =
  "M442 108 430 149M612 88 597 136M782 123 768 171M934 208 920 251M1052 334 1040 367M285 180 278 207" +
  "M207 272 197 310M341 198 323 262M500 166 477 244M670 180 646 264M834 239 809 319M973 334 951 405M1074 460 1058 511" +
  "M140 370 133 404M244 311 225 381M384 287 356 379M546 295 514 402M713 334 682 444M869 402 840 503M999 492 976 574M1085 596 1072 646" +
  "M165 417 148 478M275 419 248 511M418 438 387 549M579 476 546 597M746 526 713 644M896 584 867 687M1017 646 996 722M1097 702 1087 745" +
  "M107 486 97 528M181 529 162 604M298 579 273 681M447 631 417 744M613 680 581 797M777 720 747 829M922 749 900 837M1036 765 1021 822" +
  "M114 596 102 640M199 684 180 757M326 764 303 856M482 828 457 928M650 868 626 965M813 881 791 968M954 866 940 929" +
  "M126 731 119 772M225 847 214 906M364 938 348 1006M527 994 513 1068M699 1010 684 1077M861 986 849 1038M988 928 988 950" +
  "M153 863 150 888M272 987 267 1015M420 1067 417 1100M592 1102 588 1138M763 1086 758 1116M917 1020 914 1035";

function Sphere() {
  return (
    <svg viewBox="0 0 1200 1200" className="absolute top-[412px] right-[339px] size-[400px]" aria-label="Sphere">
      <circle cx="604" cy="604" r="538" fill="url(#sphere)" stroke="#17181c" strokeWidth="3" />
      <g fill="none" stroke="#22242b" strokeLinejoin="round">
        {sphereRows.map((points, i) => (
          <polyline key={points} points={points} strokeWidth={i === 0 || i === 7 ? 3 : 4} />
        ))}
        <path d={sphereSpokes} strokeWidth="4" />
      </g>
    </svg>
  );
}

function Triad() {
  return (
    <svg viewBox="0 0 44 60" className="absolute bottom-[47px] left-[31px] h-[60px] w-11 overflow-visible" fontSize="11" aria-label="Axes">
      <path d="M9 49 14 31" stroke="#1f7a1f" strokeWidth="3" />
      <path d="M17 20 19 30 10 28Z" fill="#135913" />
      <path d="M9 49 28 54" stroke="#d42020" strokeWidth="3" />
      <path d="M38 57 27 59 30 50Z" fill="#c01414" />
      <circle cx="8" cy="49" r="4.500" fill="#1414b8" />
      <text x="14" y="17" fill="#0a8a0a">Y</text>
      <text x="36" y="60" fill="#e01010">X</text>
    </svg>
  );
}

const taskPane = ["home", "books", "openFolder", "drawing", "ball", "listPane"];

function Viewport() {
  return (
    <main className="relative min-w-0 grow overflow-hidden bg-white">
      <Tube />
      <Sphere />
      <Triad />
      <div className="grid h-[30px] grid-cols-[1fr_auto_1fr] items-center">
        <span />
        <div className="flex items-center gap-2 opacity-80">
          {headsUp.map(([icon, more]) => (
            <button key={icon} type="button" aria-label={icon} className="flex items-center gap-2">
              <Icon name={icon} />
              {more && <Caret className="text-[#888]" />}
            </button>
          ))}
        </div>
        <div className="flex justify-end gap-3 pr-3 text-[#9a9a9a]">
          {["paneLeft", "paneRight", "minimize", "restore", "close"].map((icon) => (
            <button key={icon} type="button" aria-label={icon}>
              <Icon name={icon} className="size-3.5" />
            </button>
          ))}
        </div>
      </div>
      <div className="mt-5 ml-auto flex w-[26px] flex-col border border-r-0 border-[#808080]">
        {taskPane.map((icon) => (
          <button
            key={icon}
            type="button"
            aria-label={icon}
            className={clsx(
              "flex h-6 items-center justify-center border-b border-[#808080] last:border-b-0",
              icon === "ball" ? "bg-[#f7f7f7]" : "bg-[#d4d4d4]",
            )}
          >
            <Icon name={icon} />
          </button>
        ))}
      </div>
    </main>
  );
}

function DocumentTabs() {
  return (
    <div className="flex h-[15px] shrink-0 bg-[#f7f7f7] leading-3">
      <span className="w-0.5 bg-[#9ab8bf]" />
      <div className="ml-[25px] flex w-[65px] border-t border-[#222] bg-[#b4b4b6]">
        {["M5 2V10M13 2 7 6 13 10Z", "M11 2 5 6 11 10Z", "M5 2 11 6 5 10Z", "M3 2 9 6 3 10ZM11 2V10"].map((d) => (
          <button key={d} type="button" aria-label="Scroll tabs" className="w-4 border border-[#929294]">
            <svg viewBox="0 0 16 12" className="h-3 w-3.5" fill="#929294" stroke="#929294">
              <path d={d} />
            </svg>
          </button>
        ))}
      </div>
      <button type="button" className="w-14 pb-px pl-1 font-bold">
        Model
      </button>
      <button type="button" className="w-[69px] border border-b-0 border-[#808080] bg-[#d4d4d4] pb-0.5">
        3D Views
      </button>
      <button type="button" className="w-[108px] border-t border-r border-[#808080] bg-[#d4d4d4] pr-2 pb-0.5">
        Motion Study 1
      </button>
      <span className="grow border-t border-[#808080]" />
      <span className="w-0.5 bg-[#9ab8bf]" />
    </div>
  );
}

const filters = [
  "point", "edge", "face", "surfaces", "body", "axis", "plane", "square", "sketch", "segment", "midpoint", "center",
  "point", "edge", "face", "axis", "plane", "square", "segment",
  "weld", "datum", "tag", "blocks", "mass", "routeEnd", "routeMid",
];

function FilterBar() {
  return (
    <div className="flex h-[34px] shrink-0 items-center overflow-hidden border-b border-[#808080] bg-[#f7f7f7] pt-0.5 pl-1">
      <span className="h-[26px] border-l-2 border-dotted border-[#999]" />
      <div className="ml-3 flex items-center gap-[9px]">
        <Icon name="funnelOff" />
        <Icon name="funnelsOff" />
        <Icon name="funnels" />
      </div>
      <button type="button" aria-label="Select" className="ml-1 flex h-[26px] items-center border border-[#808080]">
        <span className="flex h-full w-7 items-center justify-center bg-[#b0b0b0]">
          <Icon name="arrow" />
        </span>
        <span className="flex w-[13px] justify-center">
          <Caret />
        </span>
      </button>
      <span className="ml-1 flex w-6">
        <Icon name="arrowOff" />
      </span>
      <span className="h-[22px] border-l border-[#808080]" />
      <div className="flex gap-[9px] pl-2.5">
        {filters.map((name, i) => (
          <button key={i} type="button" aria-label={`Filter ${name}`} className="relative">
            <Icon name={name} />
            <svg viewBox="0 0 6 8" className="absolute right-0 bottom-0 h-2 w-1.5" aria-hidden="true">
              <path d="M0 0H6V3H4V8H2V3H0Z" fill="#9b59b6" />
            </svg>
          </button>
        ))}
      </div>
      <span className="ml-2 h-[31px] border-l border-[#808080]" />
    </div>
  );
}

function StatusBar() {
  return (
    <footer className="flex h-[18px] shrink-0 items-center bg-[#f7f7f7] pr-1 pl-px">
      <span className="grow">SOLIDWORKS Premium 2017 x64 Edition</span>
      <span className="h-4 w-2 border-l border-[#ccc]" />
      <span className="h-4 w-2 border-l border-[#ccc]" />
      <span className="h-4 w-4 border-l border-[#ccc]" />
      <span className="h-4 w-8 border-l border-[#ccc]" />
      <button type="button" className="flex items-center gap-[18px]">
        MMGS
        <Caret className="rotate-180 text-[#333]" />
      </button>
      <span className="ml-[66px]">
        <Icon name="rebuild" className="size-4" />
      </span>
    </footer>
  );
}

const viewMenu = [
  { label: "Redraw", icon: "redraw", keys: "Ctrl+R" },
  { label: "Screen Capture", more: true },
  null,
  { label: "Display", more: true },
  { label: "Modify", more: true },
  { label: "Lights and Cameras", more: true },
  null,
  { label: "Hide / Show", more: true },
  null,
  { label: "Toolbars", more: true, active: true },
  { label: "Workspace", more: true },
  { label: "User Interface", more: true },
  { label: "Full Screen", icon: "fullScreen", keys: "F11" },
  null,
  { label: "Customize Menu" },
];

function ViewMenu() {
  return (
    <div role="menu" className="absolute top-8 left-[245px] z-20 w-[232px] border border-[#a0a0a0] bg-[#f7f7f7] py-0.5 pl-0.5 shadow-[3px_3px_3px_rgba(0,0,0,0.5)]">
      {viewMenu.map((item, i) =>
        item ? (
          <button
            key={item.label}
            type="button"
            role="menuitem"
            className={clsx(
              "relative flex h-6 w-full items-center border-y pr-[9px] text-left",
              item.active ? "border-l border-[#a0a0a0] bg-white" : "border-transparent",
            )}
          >
            <span className={clsx("flex items-center", item.active ? "w-[30px]" : "w-[31px]", item.icon && "pl-1")}>
              {item.icon && <Icon name={item.icon} />}
            </span>
            <span className="grow">{item.label}</span>
            {item.keys && <span className="pr-3.5">{item.keys}</span>}
            {item.more && <RightArrow />}
            {item.active && (
              <svg viewBox="0 0 114 38" className="absolute -top-2 -left-1 z-10 h-[38px] w-[115px]" aria-hidden="true">
                <ellipse cx="57" cy="19" rx="54" ry="16" fill="none" stroke="#ed1c24" strokeWidth="5" />
              </svg>
            )}
          </button>
        ) : (
          <div key={i} className="flex h-2.5 items-center pl-8">
            <span className="grow border-t border-[#b8b8b8]" />
          </div>
        ),
      )}
    </div>
  );
}

const toolbars = [
  ["2D to 3D", "twoToThree"],
  ["Align", "align"],
  ["Annotation", "annotation"],
  ["Assembly", "assembly"],
  ["Blocks", "blocks"],
  ["Configurations", "config"],
  ["Curves", "curves"],
  ["Dimensions/Relations", "dimensions"],
  ["DimXpert", "crosshair"],
  ["Display States"],
  ["Drawing", "drawing"],
  ["Explode Sketch", "explode"],
  ["Fastening Feature", "fastening"],
  ["Features", "features"],
  ["Formatting", "formatting"],
  ["Layer"],
  ["Layout Tools", "layout"],
  ["Line Format", "lineFormat"],
  ["Macro", "macro"],
  ["Mold Tools", "mold"],
  ["MotionManager", null, true],
  ["Quick Snaps", "snaps"],
  ["Reference Geometry", "refGeometry"],
  ["Render Tools", "ball"],
  ["Screen Capture", "screenCapture", true],
  ["Selection Filter", "selectionFilter", true],
  ["Sheet Format", "sheetFormat"],
  ["Sheet Metal", "sheetMetal"],
  ["Sketch", "sketch"],
  ["SOLIDWORKS MBD"],
  ["SOLIDWORKS Add-ins", "addins"],
  ["Spline Tools", "spline"],
  ["Standard", "standard"],
  ["Standard Views", "cubeView"],
  ["Surfaces", "surfaces"],
  ["Table", "table"],
  ["Task Pane", null, true],
  ["Tools", "toolbox"],
  ["View", "viewTool"],
  ["View (Heads-Up)", null, true],
  ["Web", "web"],
];

function ToolbarItem({ label, icon, checked = false }) {
  return (
    <button type="button" role="menuitemcheckbox" aria-checked={checked} className="flex h-6 w-full items-center gap-[5px] pl-1 text-left">
      <span className={clsx("flex size-6 items-center justify-center", checked && "border border-[#555] bg-[#c6c7c9]")}>
        {icon && <Icon name={icon} />}
        {checked && !icon && (
          <svg viewBox="0 0 8 8" className="size-2" fill="none" stroke="#333" strokeWidth="2" aria-hidden="true">
            <path d="M1 3.500 3.500 6 7 1" />
          </svg>
        )}
      </span>
      {label}
    </button>
  );
}

function ToolbarsMenu() {
  return (
    <div role="menu" className="absolute top-[22px] left-[474px] z-30 w-[214px] border border-[#a0a0a0] bg-[#f7f7f7] shadow-[3px_0_3px_rgba(0,0,0,0.5)]">
      <button type="button" aria-label="Scroll up" className="flex h-[19px] w-full items-center bg-[#efefef] pl-5">
        <svg viewBox="0 0 9 5" className="h-[5px] w-[9px]">
          <path d="M0 5H9L4.500 0Z" fill="#999" />
        </svg>
      </button>
      <ToolbarItem label="CommandManager" checked />
      <div className="flex h-2.5 items-center pr-0.5 pl-[34px]">
        <span className="grow border-t border-[#b8b8b8]" />
      </div>
      {toolbars.map(([label, icon, checked]) => (
        <ToolbarItem key={label} label={label} icon={icon} checked={checked} />
      ))}
      <button type="button" aria-label="Scroll down" className="flex h-[19px] w-full items-center bg-[#efefef] pl-5">
        <svg viewBox="0 0 9 5" className="h-[5px] w-[9px]">
          <path d="M0 0H9L4.500 5Z" fill="#000" />
        </svg>
      </button>
    </div>
  );
}

export default function App() {
  return (
    <div className="relative flex h-screen flex-col overflow-hidden bg-[#f7f7f7] font-['Open_Sans',sans-serif] text-[12px] leading-4 text-black">
      <Paints />
      <TitleBar />
      <Ribbon />
      <div className="flex min-h-0 grow">
        <SidePanel />
        <Viewport />
      </div>
      <DocumentTabs />
      <FilterBar />
      <StatusBar />
      <div className="flex h-0.5 shrink-0 bg-[#333]">
        <span className="ml-12 w-72 bg-[#d8d8d8]" />
      </div>
      <ViewMenu />
      <ToolbarsMenu />
    </div>
  );
}
